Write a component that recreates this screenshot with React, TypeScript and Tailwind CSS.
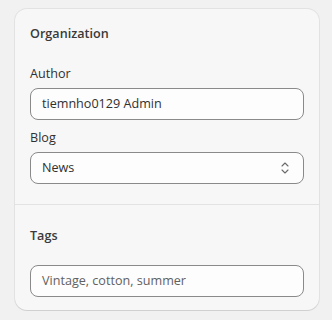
export default function App() {
  return (
    <div className="w-[332px] h-[320px] bg-[#f1f1f1] pt-[9px] pl-[15px] font-['Segoe_UI','Open_Sans',sans-serif] text-[12.6px] text-[#303030]">
      <div className="w-[304px] h-[301px] rounded-[12px] bg-[#f7f7f7] shadow-[0_1px_0_0_rgba(0,0,0,0.08),0_0_0_1px_rgba(0,0,0,0.06)] flex flex-col">
        <div className="px-[15px] pt-[15px] pb-[20px]">
          <h2 className="font-semibold text-[#3a3a3a] leading-[20px]">Organization</h2>
          <label className="block mt-[20px] leading-[20px]">Author</label>
          <div className="mt-[4px] h-[32px] rounded-[8px] border border-[#8a8a8a] bg-[#fdfdfd] px-[11px] flex items-center">
            tiemnho0129 Admin
          </div>
          <label className="block mt-[8px] leading-[20px]">Blog</label>
          <div className="mt-[4px] h-[32px] rounded-[8px] border border-[#8a8a8a] bg-[#fdfdfd] pl-[11px] pr-[13px] flex items-center justify-between">
            <span>News</span>
            <svg width="10" height="14" viewBox="0 0 10 14" fill="none" stroke="#6b6b6b" strokeWidth="1.1" strokeLinecap="round" strokeLinejoin="round">
              <path d="M2 5 L5 2 L8 5" />
              <path d="M2 9 L5 12 L8 9" />
            </svg>
          </div>
        </div>
        <div className="border-t border-[#e3e3e3] px-[15px] pt-[21px]">
          <h3 className="font-semibold text-[#3a3a3a] leading-[20px]">Tags</h3>
          <div className="mt-[19px] h-[32px] rounded-[8px] border border-[#8a8a8a] bg-[#fdfdfd] px-[11px] flex items-center text-[#616161]">
            Vintage, cotton, summer
          </div>
        </div>
      </div>
    </div>
  );
}
